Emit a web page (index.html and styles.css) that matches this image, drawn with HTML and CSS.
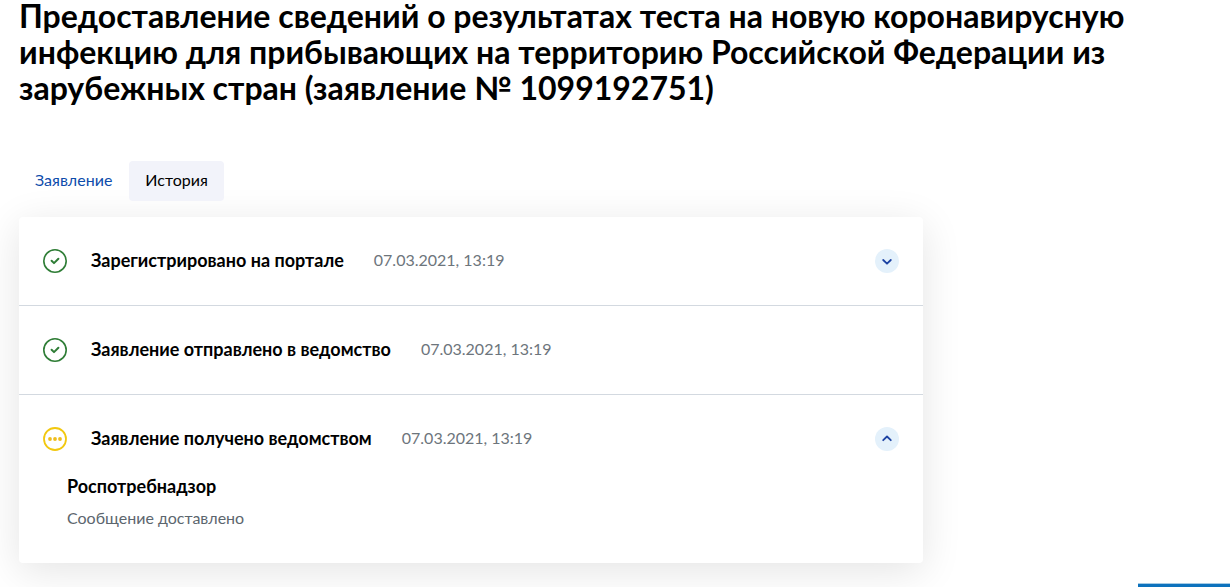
FILE: index.html
```html
<!DOCTYPE html>
<html lang="ru">
<head>
<meta charset="utf-8">
<meta name="viewport" content="width=device-width, initial-scale=1">
<title>Заявление № 1099192751</title>
<link rel="stylesheet" href="styles.css">
</head>
<body>
<main class="page">
  <h1 class="title">Предоставление сведений о результатах теста на новую коронавирусную инфекцию для прибывающих на территорию Российской Федерации из зарубежных стран (заявление № 1099192751)</h1>
  <nav class="tabs">
    <a class="tab" href="#application">Заявление</a>
    <a class="tab tab-active" href="#history" aria-current="page">История</a>
  </nav>
  <section class="card" id="history">
    <article class="step">
      <div class="step-head">
        <svg class="status status-done" viewBox="0 0 24 24"><circle cx="12" cy="12" r="11.2"/><path d="M8.6 11.8l2.4 2.3 4.4-4.3"/></svg>
        <h2 class="step-title">Зарегистрировано на портале</h2>
        <time class="step-time" datetime="2021-03-07T13:19">07.03.2021, 13:19</time>
        <button class="toggle" type="button" aria-label="Развернуть" aria-expanded="false"><svg class="chevron" viewBox="0 0 24 24"><path d="M8.2 11l3.8 3.7 3.8-3.7"/></svg></button>
      </div>
    </article>
    <article class="step">
      <div class="step-head">
        <svg class="status status-done" viewBox="0 0 24 24"><circle cx="12" cy="12" r="11.2"/><path d="M8.6 11.8l2.4 2.3 4.4-4.3"/></svg>
        <h2 class="step-title">Заявление отправлено в ведомство</h2>
        <time class="step-time" datetime="2021-03-07T13:19">07.03.2021, 13:19</time>
      </div>
    </article>
    <article class="step">
      <div class="step-head">
        <svg class="status" viewBox="0 0 24 24"><circle cx="12" cy="12" r="11" fill="none" stroke="#f2c80f" stroke-width="1.8"/><g fill="#efbd1c"><circle cx="7" cy="12" r="1.9"/><circle cx="12" cy="12" r="1.9"/><circle cx="17" cy="12" r="1.9"/></g></svg>
        <h2 class="step-title">Заявление получено ведомством</h2>
        <time class="step-time" datetime="2021-03-07T13:19">07.03.2021, 13:19</time>
        <button class="toggle" type="button" aria-label="Свернуть" aria-expanded="true"><svg class="chevron" viewBox="0 0 24 24"><path d="M8.2 13.2l3.8-3.7 3.8 3.7"/></svg></button>
      </div>
      <div class="step-body">
        <h3 class="agency">Роспотребнадзор</h3>
        <p class="message">Сообщение доставлено</p>
      </div>
    </article>
  </section>
</main>
<div class="assistant"></div>
</body>
</html>
```
FILE: styles.css
```css
* { box-sizing: border-box; }
body {
  margin: 0;
  background: #fff;
  color: #000;
  font: 16px/22px Lato, "Open Sans", sans-serif;
}
h1, h2, h3, p { margin: 0; }
.page { display: flow-root; padding: 0 19px 24px; }
.title { margin-top: -2px; font-size: 32px; line-height: 36px; font-weight: 700; }
.tabs { display: flex; gap: 1px; padding: 55px 0 16px; }
.tab {
  padding: 8px 16px 10px;
  border-radius: 4px;
  color: #0d4cab;
  text-decoration: none;
}
.tab-active { background: #f2f3fa; color: #000; }
.card {
  max-width: 904px;
  border-radius: 4px;
  background: #fff;
  box-shadow: 0 8px 40px rgba(0, 0, 0, 0.11);
}
.step { padding: 32px 24px; }
.step + .step { border-top: 1px solid #d3d9e0; }
.step-head { display: flex; align-items: flex-start; }
.status { width: 24px; height: 24px; margin-right: 24px; flex: none; }
.status-done {
  fill: none;
  stroke: #2f7d36;
  stroke-width: 1.6;
  stroke-linecap: round;
  stroke-linejoin: round;
}
.status-done path { stroke-width: 2; }
.step-title, .agency { font-size: 18px; line-height: 22px; font-weight: 700; }
.step-time { margin-left: 30px; color: #6d757c; }
.toggle {
  width: 24px;
  height: 24px;
  margin-left: auto;
  padding: 0;
  border: 0;
  border-radius: 50%;
  background: #e4f1fb;
}
.chevron {
  display: block;
  fill: none;
  stroke: #1d43a3;
  stroke-width: 1.8;
  stroke-linecap: round;
  stroke-linejoin: round;
}
.step-body { padding: 24px 24px 2px; }
.message { padding-top: 10px; color: #5c666e; }
.assistant {
  position: fixed;
  right: 0;
  bottom: 0;
  width: 92px;
  height: 4px;
  border-top: 1px solid #a5cbe5;
  background: #0d72bd;
}
```
